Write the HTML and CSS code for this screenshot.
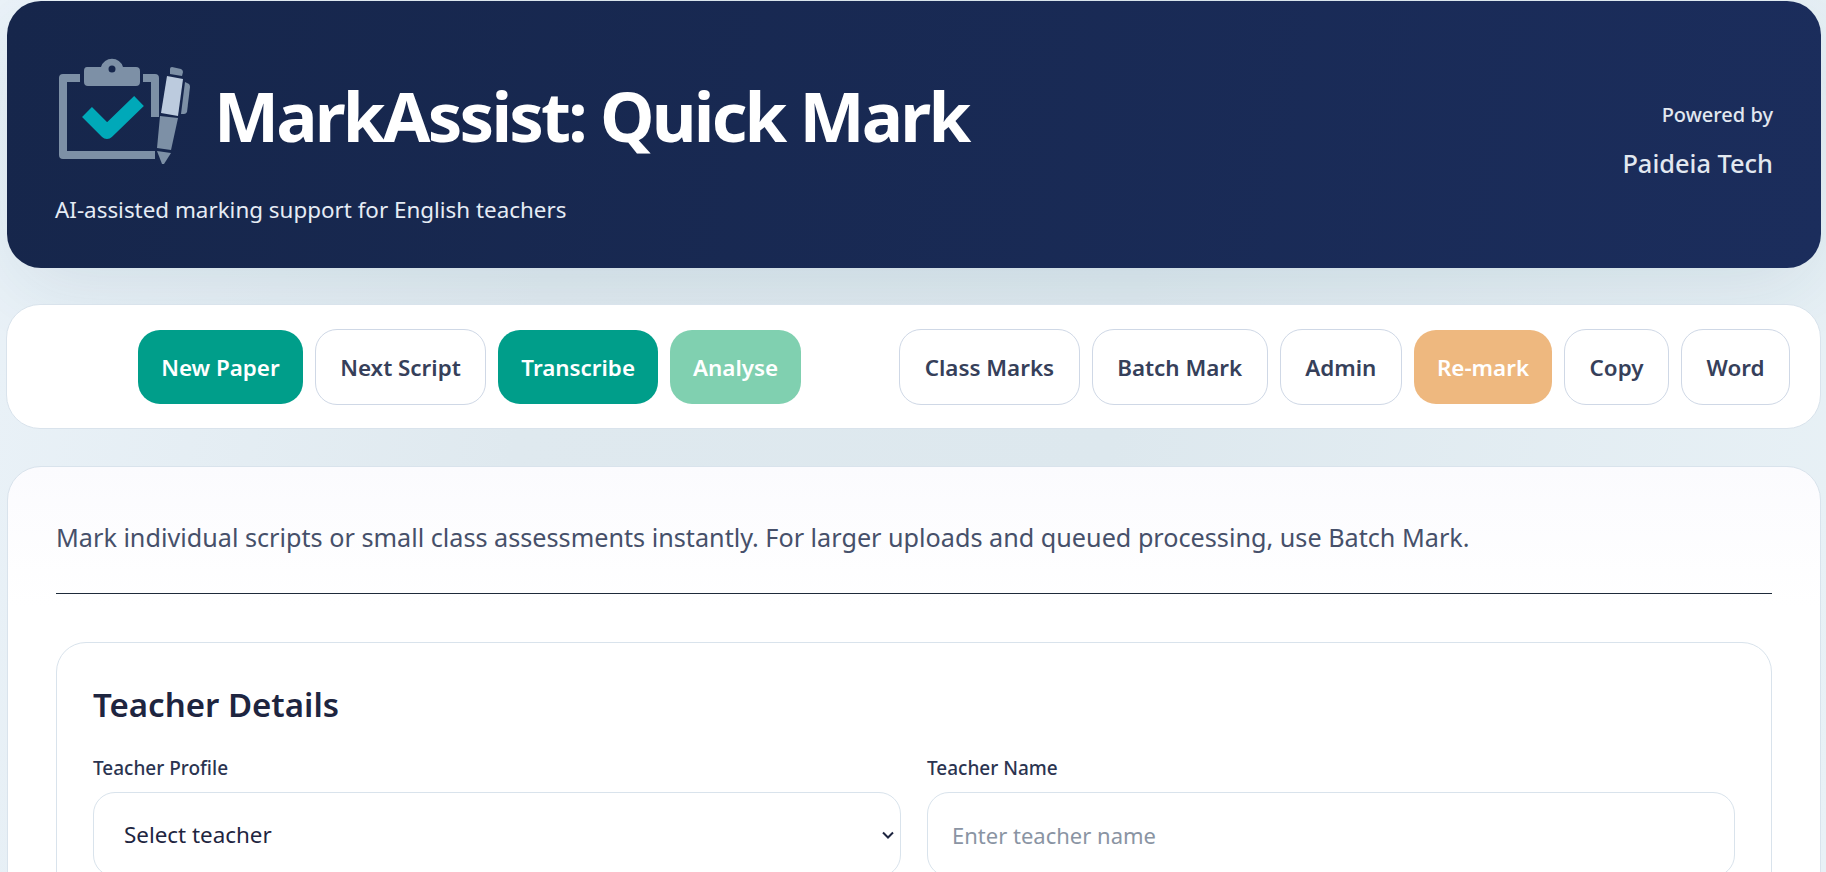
FILE: index.html
```html
<!DOCTYPE html>
<html lang="en">
<head>
  <meta charset="UTF-8"/>
  <meta name="viewport" content="width=device-width, initial-scale=1.0"/>
  <title>MarkAssist: Quick Mark</title>
  <link rel="stylesheet" href="styles.css">
</head>
<body>
  <header class="site-header">
    <div class="brand">
      <div class="brand-row">
        <svg class="brand-logo" xmlns="http://www.w3.org/2000/svg" viewBox="56 56 136 112">
          <!-- Clipboard -->
          <path class="logo-board" d="M80 79H63V156H155" />
          <path class="logo-board" d="M143 79H155V118" />
          <path class="logo-fill" fill-rule="evenodd" d="M87 68H101A11.500 11.500 0 0 1 123 68H136Q140 68 140 72V83Q140 87 136 87H88Q84 87 84 83V72Q84 68 87 68ZM112 66.500A3.500 3.500 0 1 0 112 73.500A3.500 3.500 0 1 0 112 66.500Z"/>
          <path class="logo-tick" d="M87 113L107 133L139 102"/>
          <!-- Pen -->
          <path class="logo-fill" d="M172 68L181 70Q183 71 183 73L182 77L170 75L170 70Q170 68 172 68Z"/>
          <path class="logo-pen-light" d="M167 77L183 80L178 117L161 114Z"/>
          <path class="logo-fill" d="M185 83L189 85Q190 86 190 88L187 113Q186 115 184 115H181Z"/>
          <path class="logo-fill" d="M160 117L178 119L171 151L157 149Z"/>
          <path class="logo-fill" d="M157 152L171 154L164 165H162Z"/>
        </svg>
        <h1 class="brand-title">MarkAssist: Quick Mark</h1>
      </div>
      <p class="brand-sub">AI-assisted marking support for English teachers</p>
    </div>
    <div class="powered">
      <span class="powered-label">Powered by</span>
      <span class="powered-name">Paideia Tech</span>
    </div>
  </header>

  <nav class="toolbar">
    <div class="btn-group">
      <button class="btn btn-green">New Paper</button>
      <button class="btn">Next Script</button>
      <button class="btn btn-green">Transcribe</button>
      <button class="btn btn-mint">Analyse</button>
    </div>
    <div class="btn-group">
      <button class="btn">Class Marks</button>
      <button class="btn">Batch Mark</button>
      <button class="btn">Admin</button>
      <button class="btn btn-orange">Re-mark</button>
      <button class="btn">Copy</button>
      <button class="btn">Word</button>
    </div>
  </nav>

  <main class="main-card">
    <p class="intro">Mark individual scripts or small class assessments instantly. For larger uploads and queued processing, use Batch Mark.</p>
    <hr class="divider">

    <section class="panel">
      <h2 class="panel-title">Teacher Details</h2>
      <div class="field-grid">
        <div class="field">
          <label class="field-label" for="teacherProfile">Teacher Profile</label>
          <select class="field-input field-select" id="teacherProfile">
            <option>Select teacher</option>
          </select>
        </div>
        <div class="field">
          <label class="field-label" for="teacherName">Teacher Name</label>
          <input class="field-input" id="teacherName" type="text" placeholder="Enter teacher name">
        </div>
      </div>
    </section>
  </main>
</body>
</html>
```

FILE: styles.css
```css
*, *::before, *::after {
  box-sizing: border-box;
}
html, body {
  height: 100%;
  overflow: hidden;
}
body {
  margin: 0;
  padding: 1px 5px 0 7px;
  font-family: 'Noto Sans', 'Open Sans', sans-serif;
  color: #1e2540;
  background: linear-gradient(100deg, #eaf2f8 0%, #dfe9ef 30%, #dde8ee 60%, #e8f1f6 100%);
}

/* Header */
.site-header {
  height: 267px;
  padding: 10px 48px 0;
  display: flex;
  justify-content: space-between;
  align-items: center;
  border-radius: 34px;
  background: linear-gradient(100deg, #16264b 0%, #1b2d5c 100%);
  box-shadow: 0 24px 80px -10px rgba(30, 80, 110, 0.11);
  color: #fff;
}
.brand-row {
  display: flex;
  align-items: center;
  gap: 22px;
}
.brand-logo {
  width: 136px;
  height: 112px;
  margin-left: 1px;
  flex: none;
}
.logo-board {
  fill: none;
  stroke: #7d90a6;
  stroke-width: 8;
  stroke-linejoin: round;
}
.logo-fill {
  fill: #7d90a6;
}
.logo-pen-light {
  fill: #bccbde;
}
.logo-tick {
  fill: none;
  stroke: #00a9b9;
  stroke-width: 14;
  stroke-linejoin: round;
}
.brand-title {
  margin: 10px 0 0;
  font-size: 69px;
  font-weight: 700;
  letter-spacing: -2.8px;
  line-height: 1;
  white-space: nowrap;
}
.brand-sub {
  margin: 27px 0 0;
  font-size: 22.4px;
  color: #e6ecf5;
}
.powered {
  display: flex;
  flex-direction: column;
  align-items: flex-end;
  gap: 18px;
  color: #e2e8f0;
  margin-top: 2px;
}
.powered-label {
  font-size: 20px;
  font-weight: 500;
}
.powered-name {
  font-size: 25.4px;
  font-weight: 500;
}

/* Toolbar */
.toolbar {
  height: 125px;
  margin: 36px 0 37px -1px;
  padding: 0 30px 0 0;
  display: flex;
  justify-content: flex-end;
  align-items: center;
  gap: 98px;
  background: #fff;
  border: 1px solid #d9e3ec;
  border-radius: 34px;
}
.btn-group {
  display: flex;
  align-items: center;
  gap: 12px;
}
.btn {
  height: 76px;
  padding: 2px 24.5px 0;
  border: 1px solid #cfd8e6;
  border-radius: 22px;
  background: #fff;
  color: #36405a;
  font-family: inherit;
  font-size: 22.4px;
  font-weight: 600;
  white-space: nowrap;
  cursor: pointer;
}
.btn-green, .btn-mint, .btn-orange {
  height: 74px;
  padding: 2px 23px 0;
  border: none;
  color: #fff;
}
.btn-green {
  background: #009e8a;
}
.btn-mint {
  background: #80d0b0;
}
.btn-orange {
  background: #eeb87f;
}

/* Main card */
.main-card {
  padding: 52px 48px 0;
  border: 1px solid #d9e3ec;
  border-radius: 34px;
  background: linear-gradient(180deg, #fbfbfe 0%, #fff 140px);
}
.intro {
  margin: 0;
  font-size: 25.2px;
  line-height: 36px;
  color: #46506a;
}
.divider {
  margin: 38px 0 48px;
  border: none;
  border-top: 1px solid #1e2b3a;
}
.panel {
  padding: 39px 36px 60px;
  border: 1px solid #d9e3ec;
  border-radius: 30px;
  background: #fff;
}
.panel-title {
  margin: 0 0 28px;
  font-size: 33px;
  font-weight: 600;
  line-height: 46px;
}
.field-grid {
  display: grid;
  grid-template-columns: 1fr 1fr;
  gap: 26px;
}
.field {
  display: flex;
  flex-direction: column;
}
.field-label {
  margin-bottom: 12px;
  font-size: 19px;
  font-weight: 500;
  line-height: 24px;
  color: #2b3450;
}
.field-input {
  width: 100%;
  height: 85px;
  padding: 0 24px;
  border: 1px solid #d9e3ec;
  border-radius: 22px;
  background: #fff;
  font-family: inherit;
  font-size: 22px;
  color: #1e2540;
}
.field-select {
  padding-left: 30px;
  font-size: 22.4px;
  appearance: none;
  background-image: url("data:image/svg+xml,%3Csvg xmlns='http://www.w3.org/2000/svg' width='12' height='8' viewBox='0 0 12 8'%3E%3Cpath d='M1 1.500L6 6.500L11 1.500' fill='none' stroke='%231e2540' stroke-width='2'/%3E%3C/svg%3E");
  background-repeat: no-repeat;
  background-position: right 6px center;
}
.field-input::placeholder {
  color: #8a94a3;
}
```
